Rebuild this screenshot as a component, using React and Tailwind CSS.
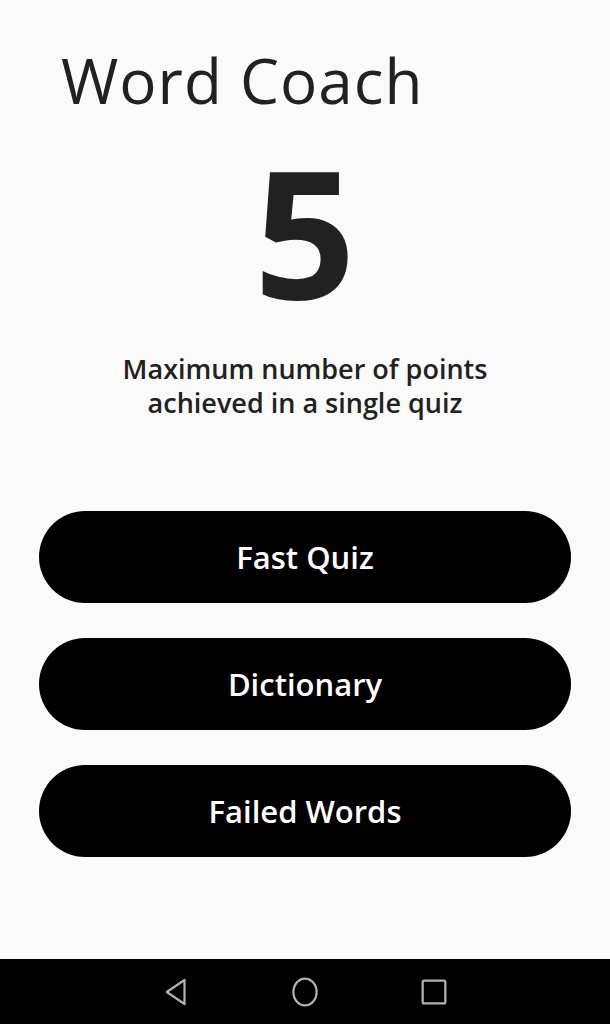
export default function App() {
  const buttons = ['Fast Quiz', 'Dictionary', 'Failed Words'];
  return (
    <div className="flex h-[1024px] w-[610px] flex-col bg-[#fafafa] font-['Open_Sans',sans-serif] text-[#212121]">
      <div className="flex flex-1 flex-col">
        <h1 className="ml-[61px] mt-[44px] text-[62px] leading-[72px] font-normal tracking-[1px]">Word Coach</h1>
        <div className="mt-[14px] text-center text-[178px] leading-[200px] font-bold">5</div>
        <p className="mt-[22px] text-center text-[27px] leading-[34px] font-semibold">
          Maximum number of points
          <br />
          achieved in a single quiz
        </p>
        <div className="mx-[39px] mt-[91px] flex flex-col gap-[35px]">
          {buttons.map((b) => (
            <button
              key={b}
              className="h-[92px] rounded-full bg-black text-[31px] font-semibold text-white"
            >
              {b}
            </button>
          ))}
        </div>
      </div>
      <div className="flex h-[65px] items-center justify-center gap-[95px] bg-black">
        <svg width="34" height="34" viewBox="0 0 24 24" fill="none" stroke="#b0b0b0" strokeWidth="1.6" strokeLinejoin="round">
          <path d="M18 3.5 L5.5 12 L18 20.5 Z" />
        </svg>
        <svg width="34" height="34" viewBox="0 0 24 24" fill="none" stroke="#b0b0b0" strokeWidth="1.6">
          <ellipse cx="12" cy="12" rx="8.2" ry="9.5" />
        </svg>
        <svg width="34" height="34" viewBox="0 0 24 24" fill="none" stroke="#b0b0b0" strokeWidth="1.6" strokeLinejoin="round">
          <rect x="4" y="4" width="16" height="16" rx="1" />
        </svg>
      </div>
    </div>
  );
}
